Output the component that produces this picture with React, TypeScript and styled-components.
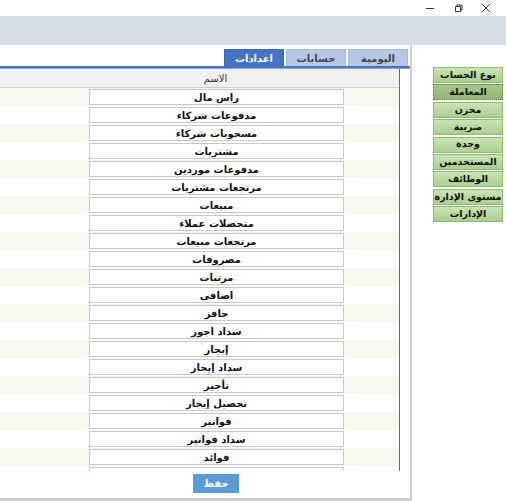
import React from "react";
import styled, { createGlobalStyle } from "styled-components";

const G = createGlobalStyle`
  html,body{margin:0;padding:0;background:#fff;overflow:hidden;}
  *{box-sizing:border-box;}
  body{font-family:"DejaVu Sans",sans-serif;line-height:1.1;}
`;
const Page = styled.div`width:506px;height:501px;display:flex;flex-direction:column;overflow:hidden;`;
const TitleBar = styled.div`height:16px;display:flex;justify-content:flex-end;align-items:center;padding-right:6px;`;
const Ctl = styled.div`width:28px;height:16px;display:flex;align-items:center;justify-content:center;`;
const Band = styled.div`height:29px;background:#d6dde8;`;
const Main = styled.div`flex:1;display:flex;min-height:0;`;
const Left = styled.div`width:412px;display:flex;flex-direction:column;border-right:2px solid #d0d0d0;`;
const Tabs = styled.div`height:21px;padding-top:4px;display:flex;justify-content:flex-end;gap:2px;padding-right:2px;`;
const Tab = styled.div<{ $on?: boolean }>`
  width:60px;height:17px;font-size:10px;font-weight:bold;display:flex;align-items:center;justify-content:center;
  background:${p => p.$on ? "#4472c4" : "#b4c7e7"};color:${p => p.$on ? "#fff" : "#444"};
  border:1px solid ${p => p.$on ? "#3a63ad" : "#a7b9d8"};border-bottom:none;
`;
const Line = styled.div`height:3px;background:#4472c4;border-bottom:1px solid #8aa4d4;`;
const Grid = styled.div`height:402px;display:flex;flex-direction:column;overflow:hidden;border-right:1px solid #666;margin-right:10px;`;
const Header = styled.div`height:19px;flex:none;background:#f0f0f0;border-bottom:1px solid #ccc;font-size:10px;color:#333;display:flex;align-items:center;justify-content:center;padding-left:32px;`;
const Row = styled.div<{ $alt: boolean }>`height:18px;flex:none;background:${p => p.$alt ? "#f7f7ee" : "#fff"};display:flex;align-items:center;position:relative;`;
const Cell = styled.div`margin-left:89px;width:255px;height:16px;border:1px solid #c8c8c8;background:#fff;font-size:10px;font-weight:bold;color:#111;display:flex;align-items:center;justify-content:center;direction:rtl;`;
const Arrow = styled.div`position:absolute;right:-8px;top:4px;width:0;height:0;border-top:3px solid transparent;border-bottom:3px solid transparent;border-left:4px solid #555;`;
const Foot = styled.div`flex:1;display:flex;justify-content:center;padding-left:22px;align-items:flex-start;border-bottom:3px solid #d0d0d0;`;
const Save = styled.div`width:46px;height:19px;background:#5b9bd5;color:#fff;font-size:10px;font-weight:bold;display:flex;align-items:center;justify-content:center;margin-top:3px;line-height:1;`;
const Side = styled.div`flex:1;display:flex;flex-direction:column;align-items:flex-end;padding:22px 3px 0 0;gap:1.4px;`;
const SBtn = styled.div<{ $on?: boolean }>`
  width:70px;height:16px;font-size:9.5px;font-weight:bold;color:#111;display:flex;align-items:center;justify-content:center;direction:rtl;white-space:nowrap;overflow:hidden;
  background:${p => p.$on ? "linear-gradient(#a6c98a,#8fb872)" : "linear-gradient(#c9e4b4,#a9d18e)"};
  border:1px ${p => p.$on ? "dotted #5a7a44" : "solid #8fb870"};
`;

const items = ["راس مال","مدفوعات شركاء","مسحوبات شركاء","مشتريات","مدفوعات موردين","مرتجعات مشتريات","مبيعات","متحصلات عملاء","مرتجعات مبيعات","مصروفات","مرتبات","اضافى","حافز","سداد اجور","إيجار","سداد إيجار","تأجير","تحصيل إيجار","فواتير","سداد فواتير","فوائد","قروض"];
const side = ["نوع الحساب","المعاملة","مخزن","ضريبة","وحدة","المستخدمين","الوظائف","مستوى الإدارة","الإدارات"];

export default function App() {
  return (<Page><G />
    <TitleBar>
      <Ctl><svg width="10" height="10"><path d="M1 5.5h8" stroke="#333" /></svg></Ctl>
      <Ctl><svg width="10" height="10"><path d="M2.5 3.5h5v5h-5z M4 3.5V2h5v5H7.5" stroke="#333" fill="none" /></svg></Ctl>
      <Ctl><svg width="10" height="10"><path d="M1 1l8 8M9 1l-8 8" stroke="#333" /></svg></Ctl>
    </TitleBar>
    <Band />
    <Main>
      <Left>
        <Tabs><Tab $on>اعدادات</Tab><Tab>حسابات</Tab><Tab>اليومية</Tab></Tabs>
        <Line />
        <Grid>
          <Header>الاسم</Header>
          {items.map((t, i) => <Row key={i} $alt={i % 2 === 0}><Cell>{t}</Cell>{i === 0 && <Arrow />}</Row>)}
        </Grid>
        <Foot><Save>حفظ</Save></Foot>
      </Left>
      <Side>{side.map((s, i) => <SBtn key={i} $on={i === 1}>{s}</SBtn>)}</Side>
    </Main>
  </Page>);
}
